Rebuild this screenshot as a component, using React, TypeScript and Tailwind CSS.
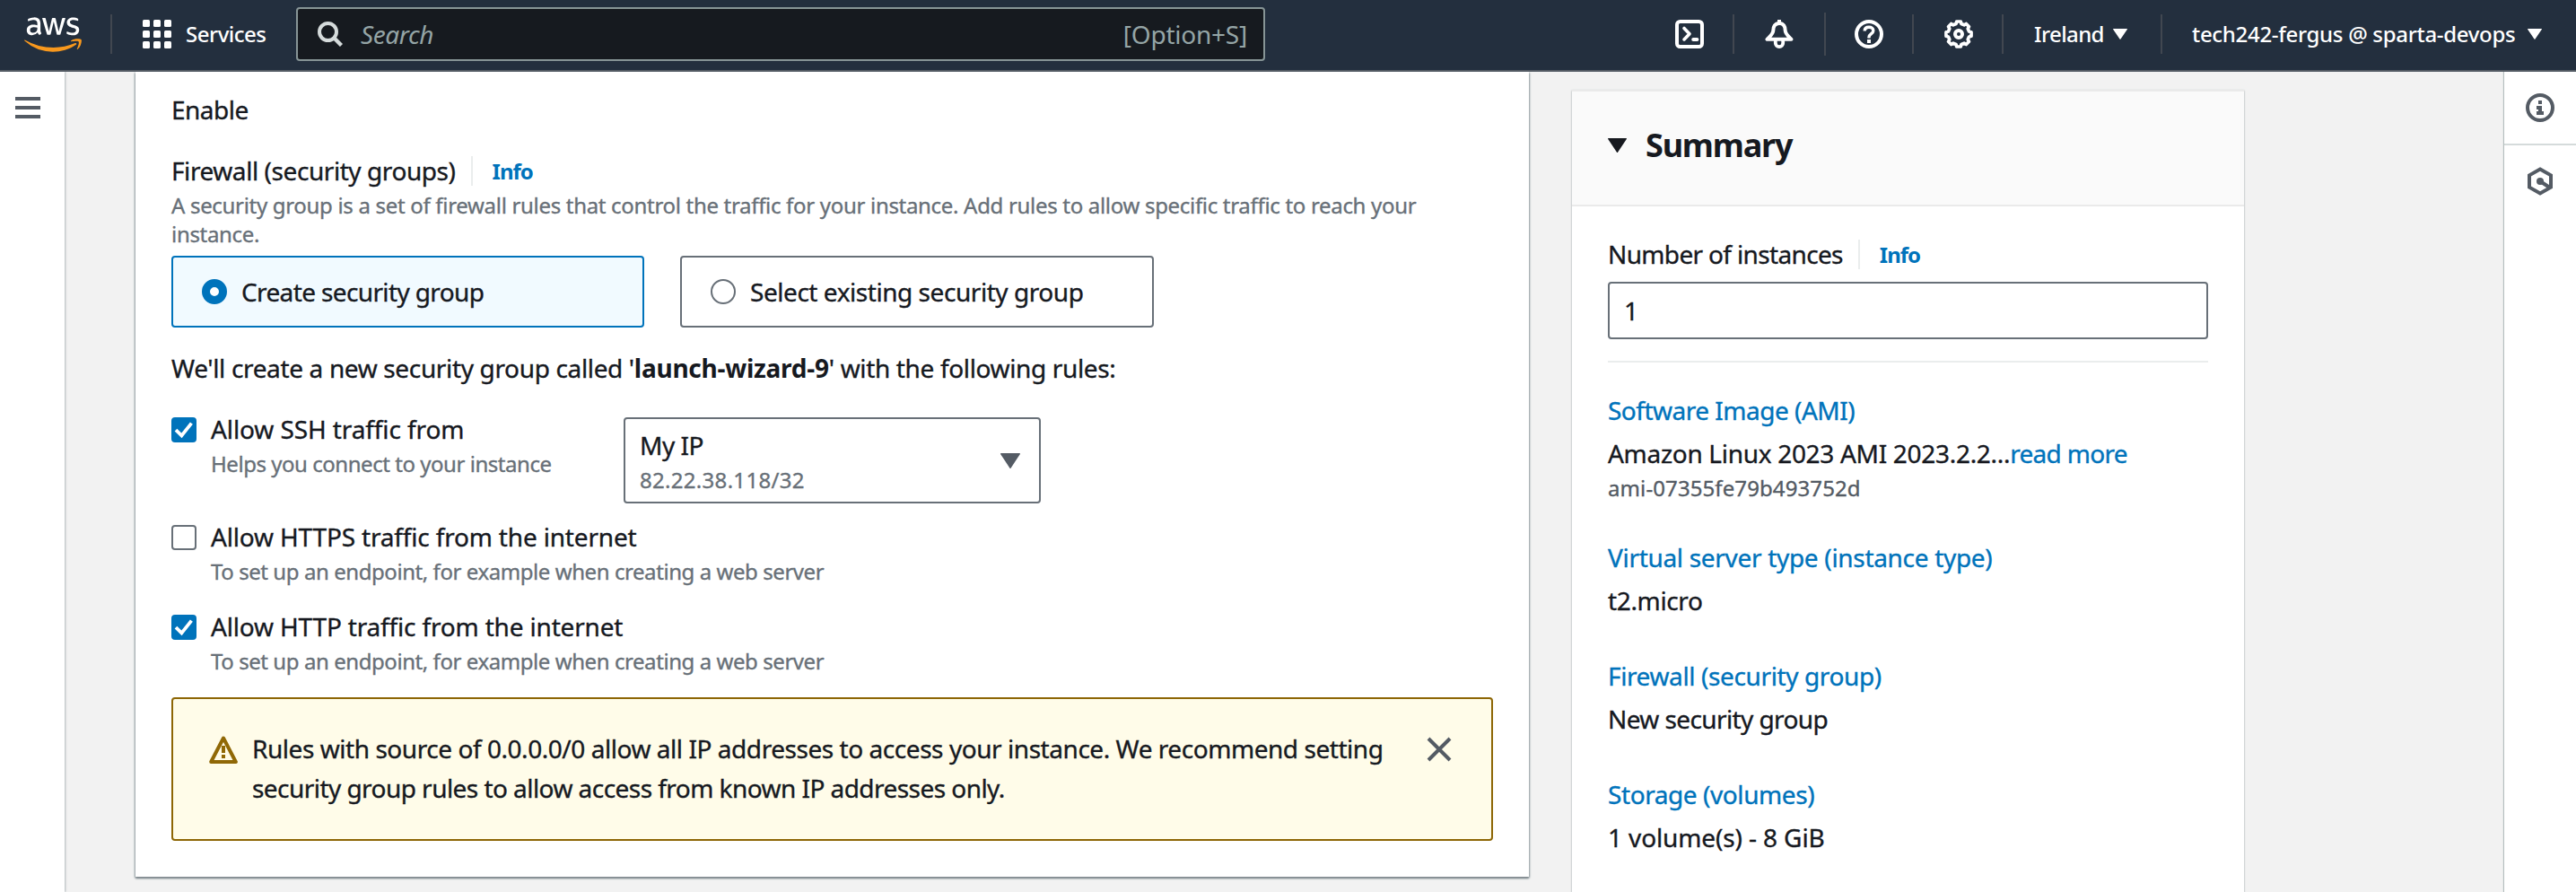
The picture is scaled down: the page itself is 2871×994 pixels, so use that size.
import type { ReactNode } from "react";
import { FaAws } from "react-icons/fa";

function Divider({ className = "h-11" }: { className?: string }) {
  return <span className={`w-0.5 shrink-0 bg-[#414750] ${className}`} />;
}

function Caret({ className }: { className: string }) {
  return (
    <svg viewBox="0 0 16 12" preserveAspectRatio="none" className={`shrink-0 fill-current ${className}`}>
      <path d="M0.6 0h14.8a.5.5 0 0 1 .45.8L8.5 11.6a.6.6 0 0 1-1 0L.15.8A.5.5 0 0 1 .6 0z" />
    </svg>
  );
}

function Icon({ children, className = "" }: { children: ReactNode; className?: string }) {
  return (
    <svg viewBox="0 0 32 32" fill="none" stroke="currentColor" strokeWidth="4" className={`size-8 shrink-0 ${className}`}>
      {children}
    </svg>
  );
}

function gearPath() {
  const pts: string[] = [];
  for (let i = 0; i < 8; i++) {
    const mid = (i * Math.PI) / 4;
    const corners: [number, number][] = [
      [-0.25, 11.9],
      [-0.16, 14.2],
      [0.16, 14.2],
      [0.25, 11.9],
    ];
    for (const [a, r] of corners) {
      pts.push(`${(16 + r * Math.cos(mid + a)).toFixed(2)} ${(16 + r * Math.sin(mid + a)).toFixed(2)}`);
    }
  }
  return `M${pts.join("L")}Z`;
}

function Header() {
  return (
    <header className="flex h-20 shrink-0 items-center border-b-2 border-[#545b64] bg-[#232f3e] pb-0.5 text-white">
      <svg className="absolute size-0">
        <defs>
          <linearGradient id="awsFill" x1="0" y1="0" x2="0" y2="1">
            <stop offset="0.57" stopColor="#ffffff" />
            <stop offset="0.57" stopColor="#f8981d" />
          </linearGradient>
        </defs>
      </svg>
      <FaAws className="ml-[27px] h-[51px] w-16 shrink-0 fill-[url(#awsFill)]" />
      <Divider className="ml-8 h-11" />
      <svg viewBox="0 0 32 32" className="ml-[34px] size-8 fill-white">
        {[0, 12, 24].map((y) => [0, 12, 24].map((x) => <rect key={`${x}-${y}`} x={x} y={y} width="8" height="8" rx="1.5" />))}
      </svg>
      <span className="ml-4 w-[123px] text-2xl font-medium tracking-[-0.5px]">Services</span>
      <div className="flex h-[60px] w-[1080px] items-center rounded border-2 border-[#879596] bg-[#161a1f] pl-[22px] pr-[18px] text-[28px] leading-[44px] text-[#95a5a6]">
        <svg viewBox="0 0 28 28" fill="none" stroke="#d5dbdb" strokeWidth="4" className="size-7">
          <circle cx="11.5" cy="11.5" r="9.5" />
          <path d="M18 18l8.5 8.5" strokeWidth="4.4" />
        </svg>
        <span className="ml-5 grow italic tracking-[-0.4px]">Search</span>
        <span className="tracking-[-0.23px]">[Option+S]</span>
      </div>

      <Icon className="ml-[457px]">
        <rect x="2" y="2" width="28" height="28" rx="3.5" />
        <path d="M10 9.5l6 6.2-6 6.2" strokeLinecap="round" strokeLinejoin="round" strokeWidth="3.6" />
        <path d="M20.2 22h4.2" strokeLinecap="round" />
      </Icon>
      <Divider className="ml-8 h-11" />
      <Icon className="ml-[34px]">
        <path d="M16 0v3" />
        <path
          d="M16 4c-5 0-6.700 4-6.700 8 0 3.600-3 6-6.800 9.800h27c-3.800-3.800-6.800-6.200-6.800-9.800 0-4-1.700-8-6.700-8z"
          strokeLinejoin="round"
          strokeWidth="4"
        />
        <path d="M11.800 23v2.900a4.200 4.200 0 0 0 8.400 0V23" strokeWidth="3.800" />
      </Icon>
      <Divider className="ml-[34px] h-12" />
      <Icon className="ml-8">
        <circle cx="16" cy="16" r="14" />
        <path d="M11.200 12.400c0-2.800 2-4.200 4.800-4.200s4.800 1.600 4.800 4c0 3.400-4.800 3.400-4.800 7.300v1" strokeWidth="3.400" />
        <path d="M16 22v4" />
      </Icon>
      <Divider className="ml-8 h-11" />
      <Icon className="ml-[34px]">
        <path d={gearPath()} strokeWidth="3.700" strokeLinejoin="round" />
        <circle cx="16" cy="16" r="4" />
      </Icon>
      <Divider className="ml-8 h-11" />
      <span className="ml-[34px] w-[88px] text-2xl font-medium tracking-[-0.6px]">Ireland</span>
      <Caret className="h-3 w-4" />
      <Divider className="ml-[37px] h-11" />
      <span className="ml-[33px] w-[374px] whitespace-nowrap text-2xl font-medium tracking-[-0.31px]">
        tech242-fergus @ sparta-devops
      </span>
      <Caret className="h-3 w-4" />
    </header>
  );
}

function Info() {
  return (
    <span className="ml-[17px] flex h-11 items-center">
      <span className="mt-px h-[33px] w-0.5 bg-[#eaeded]" />
      <a className="ml-[22px] mt-0.5 text-2xl font-bold tracking-[-1px] text-[#0073bb] [-webkit-text-stroke:0]">Info</a>
    </span>
  );
}

function Checkbox({ checked }: { checked: boolean }) {
  return checked ? (
    <svg viewBox="0 0 28 28" fill="none" className="mt-[9px] size-7 shrink-0">
      <rect width="28" height="28" rx="4" fill="#0073bb" />
      <path d="M5 14.200l6.400 6.200L22.400 6.600" stroke="#fff" strokeWidth="3.800" />
    </svg>
  ) : (
    <span className="mt-[9px] size-7 shrink-0 rounded border-2 border-[#687078] bg-white" />
  );
}

function Rule({ checked, label, hint, tight }: { checked: boolean; label: string; hint: string; tight?: boolean }) {
  return (
    <div className="flex h-[100px] gap-4">
      <Checkbox checked={checked} />
      <div className="flex flex-col gap-px whitespace-nowrap">
        <span className={tight ? "tracking-[-0.1px]" : "tracking-[-0.17px]"}>{label}</span>
        <span className={`text-2xl leading-8 text-[#687078] ${tight ? "tracking-[-0.46px]" : "tracking-[-0.43px]"}`}>{hint}</span>
      </div>
    </div>
  );
}

function NetworkCard() {
  return (
    <section className="ml-[79px] flex h-[897px] w-[1553px] shrink-0 flex-col bg-white px-10 pt-5 text-[28px] leading-[44px] shadow-[0_2px_2px_0_#7d888c,1px_1px_2px_0_#a9b2b6,-1px_1px_2px_0_#a9b2b6] [-webkit-text-stroke:0.35px]">
      <span className="tracking-[-0.5px]">Enable</span>
      <div className="mt-6 flex">
        <span className="tracking-[-0.43px]">Firewall (security groups)</span>
        <Info />
      </div>
      <p className="mt-px h-16 w-[1440px] text-2xl leading-8 tracking-[-0.31px] text-[#687078]">
        A security group is a set of firewall rules that control the traffic for your instance. Add rules to allow specific
        traffic to reach your instance.
      </p>
      <div className="mt-2 flex gap-10">
        <div className="flex h-20 w-[527px] items-center gap-4 rounded border-2 border-[#0073bb] bg-[#f1faff] pl-8">
          <span className="size-7 rounded-full border-[9px] border-[#0073bb] bg-white" />
          <span className="tracking-[-0.63px]">Create security group</span>
        </div>
        <div className="flex h-20 w-[528px] items-center gap-4 rounded border-2 border-[#687078] bg-white pl-8">
          <span className="size-7 rounded-full border-2 border-[#687078] bg-white" />
          <span className="tracking-[-0.45px]">Select existing security group</span>
        </div>
      </div>
      <p className="mt-[23px] whitespace-nowrap tracking-[-0.35px]">
        We'll create a new security group called '
        <b className="tracking-[-0.25px] [-webkit-text-stroke:0]">launch-wizard-9</b>' with the following rules:
      </p>
      <div className="mt-6 flex h-[120px]">
        <div className="w-[504px]">
          <Rule checked label="Allow SSH traffic from" hint="Helps you connect to your instance" tight />
        </div>
        <div className="mt-[9px] flex h-24 w-[465px] items-center justify-between rounded border-2 border-[#687078] bg-white pl-4 pr-[21px]">
          <div className="-mt-0.5 flex flex-col gap-px">
            <span className="tracking-[-0.5px]">My IP</span>
            <span className="text-2xl leading-8 tracking-[0.3px] text-[#687078]">82.22.38.118/32</span>
          </div>
          <Caret className="h-[17px] w-[22px] text-[#545b64]" />
        </div>
      </div>
      <Rule checked={false} label="Allow HTTPS traffic from the internet" hint="To set up an endpoint, for example when creating a web server" />
      <Rule checked label="Allow HTTP traffic from the internet" hint="To set up an endpoint, for example when creating a web server" />
      <div className="mt-px flex h-40 w-[1473px] rounded border-2 border-[#8d6605] bg-[#fffce9] pl-10 pr-[42px] pt-[33px]">
        <Icon className="mt-[7px] text-[#906806]">
          <path d="M16 3.500L29.800 30H2.200z" strokeLinejoin="round" />
          <path d="M16 12v8M16 22v4" />
        </Icon>
        <p className="ml-4 flex w-[1280px] flex-col whitespace-nowrap">
          <span className="tracking-[-0.45px]">
            Rules with source of 0.0.0.0/0 allow all IP addresses to access your instance. We recommend setting
          </span>
          <span className="tracking-[-0.55px]">security group rules to allow access from known IP addresses only.</span>
        </p>
        <Icon className="ml-auto mt-[7px] text-[#545b64]">
          <path d="M4 4l24 24M28 4L4 28" />
        </Icon>
      </div>
    </section>
  );
}

function SummaryItem({ title, children, className }: { title: string; children: ReactNode; className: string }) {
  return (
    <div className={`flex flex-col gap-1 ${className}`}>
      <a className="text-[#0073bb]">{title}</a>
      {children}
    </div>
  );
}

function SummaryCard() {
  return (
    <aside className="ml-12 mt-5 flex w-[749px] shrink-0 flex-col border-t-2 border-[#eaeaea] bg-white text-[28px] leading-[44px] shadow-[0_1px_2px_0_#8e9a9c] [-webkit-text-stroke:0.35px]">
      <div className="flex h-32 border-b-2 border-[#eaeaea] bg-[#fafafa] pl-10 pt-[38px]">
        <Caret className="mt-[14px] h-4 w-[21px] text-[#16191f]" />
        <h2 className="ml-[21px] text-4xl font-bold leading-[44px] tracking-[-1.2px] [-webkit-text-stroke:0]">Summary</h2>
      </div>
      <div className="flex flex-col px-10 pt-[31px]">
        <div className="flex">
          <span className="tracking-[-0.65px]">Number of instances</span>
          <Info />
        </div>
        <div className="mt-[9px] flex h-16 items-center rounded border-2 border-[#687078] bg-white pl-4">1</div>
        <div className="mt-6 h-0.5 bg-[#eaeded]" />
        <div className="mt-[31px] flex flex-col">
          <a className="tracking-[-0.5px] text-[#0073bb]">Software Image (AMI)</a>
          <span className="mt-1 tracking-[-0.3px]">
            Amazon Linux 2023 AMI 2023.2.2...<a className="tracking-[-0.7px] text-[#0073bb]">read more</a>
          </span>
          <span className="mt-px text-2xl leading-8 tracking-[0.1px] text-[#545b64]">ami-07355fe79b493752d</span>
        </div>
        <SummaryItem className="mt-[39px] tracking-[-0.31px]" title="Virtual server type (instance type)">
          <span className="tracking-[-0.35px]">t2.micro</span>
        </SummaryItem>
        <SummaryItem className="mt-10 tracking-[-0.38px]" title="Firewall (security group)">
          <span className="tracking-[-0.6px]">New security group</span>
        </SummaryItem>
        <SummaryItem className="mt-10 tracking-[-0.42px]" title="Storage (volumes)">
          <span className="tracking-[-0.12px]">1 volume(s) - 8 GiB</span>
        </SummaryItem>
      </div>
    </aside>
  );
}

export default function App() {
  return (
    <div className="flex h-[994px] w-[2871px] flex-col overflow-hidden bg-[#f2f2f2] font-['Noto_Sans','Open_Sans',sans-serif] text-[#16191f]">
      <Header />
      <div className="flex min-h-0 grow overflow-hidden">
        <nav className="flex w-[72px] shrink-0 flex-col gap-1.5 bg-white pl-[17px] pt-7 shadow-[1px_0_2px_0_#b0b8ba]">
          <span className="h-1 w-7 bg-[#545b64]" />
          <span className="h-1 w-7 bg-[#545b64]" />
          <span className="h-1 w-7 bg-[#545b64]" />
        </nav>
        <NetworkCard />
        <SummaryCard />
        <nav className="ml-auto flex w-20 shrink-0 flex-col bg-white text-[#545b64] shadow-[-1px_0_1px_0_#b5bfbf]">
          <div className="flex h-[82px] items-center border-b-2 border-[#d5dbdb] pl-6">
            <Icon>
              <circle cx="16" cy="16" r="14" />
              <path d="M14 8h4v4h-4zM12 14h6v6h2v4h-8v-4h2v-2h-2z" fill="currentColor" stroke="none" />
            </Icon>
          </div>
          <div className="flex h-20 items-center pl-6">
            <Icon>
              <path d="M16 2.500L28 9.300v13.400L16 29.500 4 22.700V9.300z" />
              <path d="M16 16l10 6.500" />
              <circle cx="16" cy="16" r="4" fill="currentColor" stroke="none" />
            </Icon>
          </div>
        </nav>
      </div>
    </div>
  );
}
